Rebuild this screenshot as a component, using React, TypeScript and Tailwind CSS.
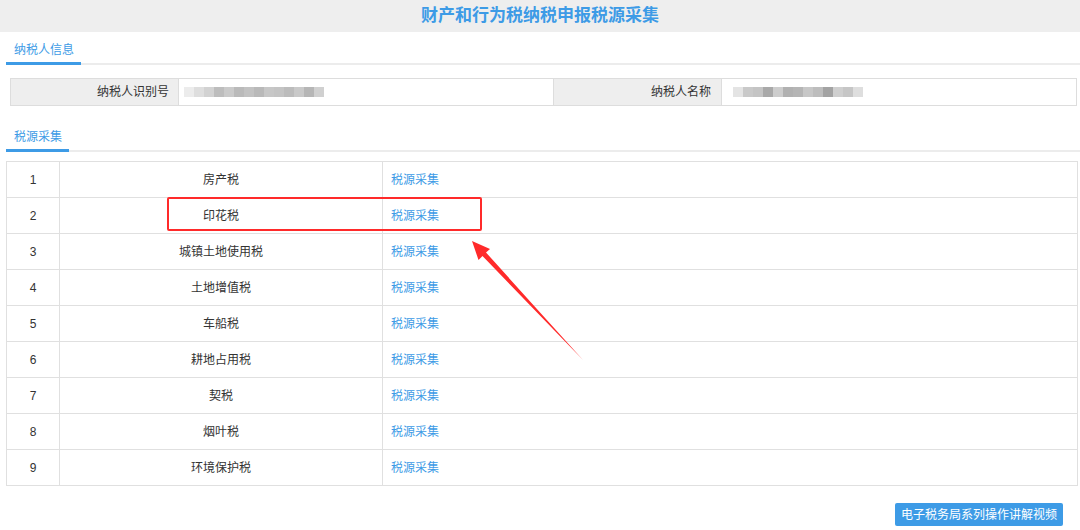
const taxes = [
  "房产税",
  "印花税",
  "城镇土地使用税",
  "土地增值税",
  "车船税",
  "耕地占用税",
  "契税",
  "烟叶税",
  "环境保护税",
];

// pixelated blur over the hidden taxpayer values
const idBlocks = [
  "bg-[#ececec]",
  "bg-[#dedede]",
  "bg-[#d2d2d2]",
  "bg-[#bdbdbd]",
  "bg-[#cacaca]",
  "bg-[#bababa]",
  "bg-[#c2c2c2]",
  "bg-[#b9b9b9]",
  "bg-[#c7c7c7]",
  "bg-[#c4c4c4]",
  "bg-[#bcbcbc]",
  "bg-[#c9c9c9]",
  "bg-[#b6b6b6]",
  "bg-[#d0d0d0]",
];

const nameBlocks = [
  "bg-[#e4e4e4]",
  "bg-[#c9c9c9]",
  "bg-[#c4c4c4]",
  "bg-[#a9a9a9]",
  "bg-[#cdcdcd]",
  "bg-[#b1b1b1]",
  "bg-[#b5b5b5]",
  "bg-[#c7c7c7]",
  "bg-[#bdbdbd]",
  "bg-[#a3a3a3]",
  "bg-[#cfcfcf]",
  "bg-[#c6c6c6]",
  "bg-[#dedede]",
];

function Blur({ blocks }: { blocks: string[] }) {
  return (
    <div className="flex h-[10px]">
      {blocks.map((cls, i) => (
        <div key={i} className={`h-[10px] w-[10px] ${cls}`} />
      ))}
    </div>
  );
}

function Tab({ label }: { label: string }) {
  return (
    <div className="flex border-b-2 border-[#ececec]">
      <div className="-mb-[2px] border-b-[3px] border-[#3d9be6] pb-[3px] pl-[8px] pr-[7px] text-[12px] leading-[18px] text-[#3d9be6]">
        {label}
      </div>
    </div>
  );
}

export default function App() {
  return (
    <div
      className="relative h-[530px] w-[1080px] overflow-hidden bg-white text-[#333]"
      style={{ fontFamily: '"Liberation Sans", "Noto Sans CJK SC", sans-serif' }}
    >
      <div className="flex h-[32px] items-center justify-center bg-[#eeeeee] pb-[1px] text-[17px] font-bold text-[#3d9be6]">
        财产和行为税纳税申报税源采集
      </div>

      <div className="pl-[6px]">
        <div className="pt-[9px]">
          <Tab label="纳税人信息" />
        </div>

        <div className="ml-[4px] mr-[3px] mt-[13px] flex h-[28px] border border-[#dddddd] text-[12px]">
          <div className="flex w-[168px] items-center justify-end border-r border-[#dddddd] bg-[#eeeeee] pr-[9px]">
            纳税人识别号
          </div>
          <div className="flex w-[375px] items-center border-r border-[#dddddd] pl-[5px]">
            <Blur blocks={idBlocks} />
          </div>
          <div className="flex w-[168px] items-center justify-end border-r border-[#dddddd] bg-[#eeeeee] pr-[10px]">
            纳税人名称
          </div>
          <div className="flex flex-1 items-center pl-[11px]">
            <Blur blocks={nameBlocks} />
          </div>
        </div>

        <div className="mt-[22px]">
          <Tab label="税源采集" />
        </div>

        <div className="mr-[2px] mt-[9px] border border-[#e0e0e0] text-[12px]">
          {taxes.map((tax, i) => (
            <div
              key={tax}
              className="grid h-[36px] grid-cols-[53px_323px_1fr] border-b border-[#e0e0e0] last:h-[35px] last:border-b-0"
            >
              <div className="flex items-center justify-center border-r border-[#e0e0e0]">
                {i + 1}
              </div>
              <div className="flex items-center justify-center border-r border-[#e0e0e0]">
                {tax}
              </div>
              <div className="flex items-center pl-[8px]">
                <a className="cursor-pointer text-[#3d9be6]">税源采集</a>
              </div>
            </div>
          ))}
        </div>

        <div className="mt-[17px] flex justify-end pr-[17px]">
          <button className="h-[23px] rounded-[2px] bg-[#3d9be6] px-[6px] text-[12px] text-white">
            电子税务局系列操作讲解视频
          </button>
        </div>
      </div>

      {/* annotation over the table */}
      <div className="pointer-events-none absolute left-[167px] top-[197px] h-[34px] w-[315px] rounded-[2px] border-2 border-[#ff2a2a]" />
      <svg
        className="pointer-events-none absolute left-0 top-0"
        width="1080"
        height="530"
        viewBox="0 0 1080 530"
      >
        <polygon
          points="472,241 490,249 486,252.5 583,360 482.5,256 478.5,260"
          fill="#ff2a2a"
        />
      </svg>
    </div>
  );
}
